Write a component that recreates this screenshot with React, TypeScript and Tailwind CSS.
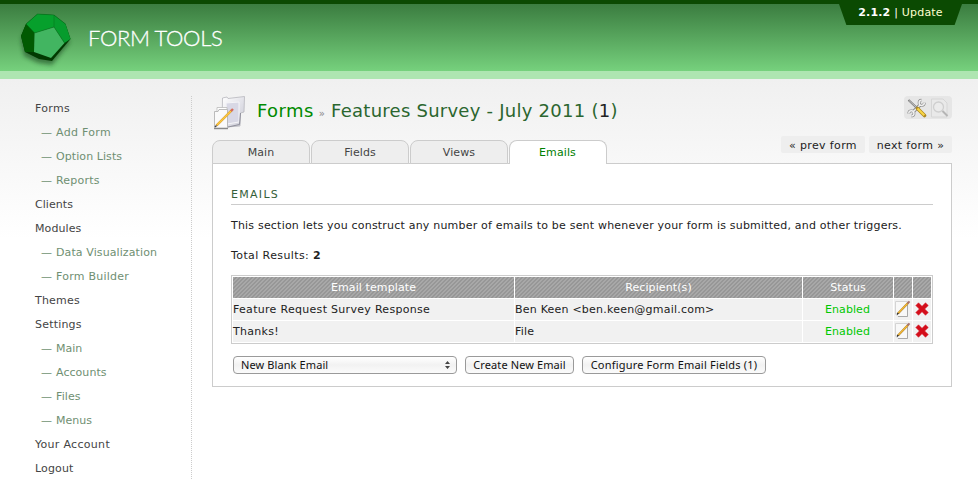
import React from "react";

const nav: { label: string; sub?: boolean; spacing: string }[] = [
  { label: "Forms", spacing: "tracking-[0.3px]" },
  { label: "Add Form", sub: true, spacing: "tracking-[0.3px]" },
  { label: "Option Lists", sub: true, spacing: "tracking-[0.08px]" },
  { label: "Reports", sub: true, spacing: "tracking-[0.2px]" },
  { label: "Clients", spacing: "tracking-[0.05px]" },
  { label: "Modules", spacing: "tracking-[0.1px]" },
  { label: "Data Visualization", sub: true, spacing: "tracking-[0.1px]" },
  { label: "Form Builder", sub: true, spacing: "tracking-[0.25px]" },
  { label: "Themes", spacing: "tracking-[0.2px]" },
  { label: "Settings", spacing: "tracking-[0.2px]" },
  { label: "Main", sub: true, spacing: "tracking-[0px]" },
  { label: "Accounts", sub: true, spacing: "tracking-[0.05px]" },
  { label: "Files", sub: true, spacing: "tracking-[0.1px]" },
  { label: "Menus", sub: true, spacing: "tracking-[0px]" },
  { label: "Your Account", spacing: "tracking-[0.3px]" },
  { label: "Logout", spacing: "tracking-[0.15px]" },
];

const tabs = ["Main", "Fields", "Views", "Emails"];

const emails = [
  { name: "Feature Request Survey Response", to: "Ben Keen <ben.keen@gmail.com>" },
  { name: "Thanks!", to: "File" },
];

const stripes =
  "bg-[repeating-linear-gradient(135deg,#a8a8a8_0px,#a8a8a8_2px,#979797_2px,#979797_2.83px)]";

function Logo() {
  return (
    <svg width="60" height="60" viewBox="16 10 60 60" className="mt-[10px] ml-4 shrink-0">
      <defs>
        <filter id="logoShadow" x="-20%" y="-20%" width="140%" height="150%">
          <feGaussianBlur stdDeviation="2" />
        </filter>
      </defs>
      <path d="M26 28 54 22 70 42 52 65 38 63 24 56 21 40Z" fill="#1d4a20" opacity="0.6" filter="url(#logoShadow)" />
      <path d="M37.5 14 54 15 65.5 24 70.5 39 52 61 39 59 25 52 21 36 26 24Z" fill="#013a01" />
      <path d="M26 24 37.5 14 54 15 54 27 34.5 33Z" fill="#06a02c" />
      <path d="M54 15 65.5 24 70.5 39 64.5 43 54 27Z" fill="#069c2d" />
      <path d="M26 24 34.5 33 34 52 25 52 21 36Z" fill="#015a02" />
      <path d="M34.5 33 54 27 64.5 43 51 58 34 52Z" fill="#42b561" />
      <path d="M26 24 37.5 14 54 15 65.5 24M54 15V27L34.5 33 26 24M54 27 64.5 43" fill="none" stroke="#04701a" strokeWidth=".5" />
    </svg>
  );
}

function FormsIcon() {
  return (
    <svg width="34" height="36" viewBox="212 94 34 36" className="shrink-0">
      <defs>
        <linearGradient id="folder" x1="0" y1="0" x2="1" y2="1">
          <stop offset="0" stopColor="#fff" />
          <stop offset="1" stopColor="#c8c8d4" />
        </linearGradient>
      </defs>
      <path d="M222.500 98 227 97 228 98.500 244.500 96.500 244 112 240.500 113 240 126 226 127 222 124Z" fill="url(#folder)" stroke="#b6b6bd" strokeWidth=".8" />
      <path d="M226 103 239 102 239 122 227 124Z" fill="#d8d8e5" stroke="#f5f5f8" />
      <path d="M240.500 113 239.500 124.500 228 127" fill="none" stroke="#8f8f9b" />
      <path d="M217 107.500H227V126H217Z" fill="#fff" stroke="#bbb" strokeWidth=".8" />
      <path d="M214.500 111.500H218L219 109.500H227.500V128H214.500Z" fill="#fafafa" stroke="#b4b4b4" strokeWidth=".9" />
      <path d="M214 128.700H228" stroke="#777" />
      <path d="M216.500 125.500 231.500 110.500" stroke="#c98d28" strokeWidth="2.400" />
      <path d="M217 125 231 111" stroke="#fcc941" strokeWidth="1.700" />
      <path d="M231 111 233 109" stroke="#d66a5c" strokeWidth="2.400" />
      <path d="M215 127 216.500 125.500" stroke="#444" strokeWidth="1.500" />
    </svg>
  );
}

function ToolsIcon() {
  return (
    <svg width="20" height="20" viewBox="0 0 20 20">
      <path d="M1.500 2 11 11" stroke="#777" strokeWidth="2" />
      <path d="M2 2.500 10 10" stroke="#ddd" strokeWidth=".8" />
      <path d="M5.500 14.500 13.500 6.500" stroke="#8a8a8a" strokeWidth="3.400" />
      <path d="M1.800 15.500A2.600 2.600 0 1 1 4.500 18M14.500 2.200A2.600 2.600 0 1 0 17.300 4.800" fill="none" stroke="#8a8a8a" strokeWidth="2.800" />
      <path d="M5.500 14.500 13.500 6.500M1.800 15.500A2.600 2.600 0 1 1 4.500 18M14.500 2.200A2.600 2.600 0 1 0 17.300 4.800" fill="none" stroke="#f0f0f0" strokeWidth="1.500" />
      <path d="M10.500 10.500 17.500 17.500" stroke="#ad8820" strokeWidth="3.600" strokeLinecap="round" />
      <path d="M10.500 10.500 17.300 17.300" stroke="#f9d545" strokeWidth="2.200" />
    </svg>
  );
}

function PreviewIcon() {
  return (
    <svg width="20" height="20" viewBox="0 0 20 20">
      <path d="M1.500 1H13L17 5V19H1.500Z" fill="#e9e9e9" stroke="#d6d6d6" />
      <circle cx="8.500" cy="9" r="5" fill="#ebebeb" stroke="#cfcfcf" strokeWidth="1.300" />
      <path d="M12.500 13 17.500 18" stroke="#b5b5b5" strokeWidth="2" />
    </svg>
  );
}

function EditIcon() {
  return (
    <svg width="16" height="18" viewBox="0 0 16 18" className="mb-px">
      <path d="M.5 1.500H12.500V16.500H3L.5 14Z" fill="#f8f8f8" stroke="#d4d4d4" />
      <path d="M3 16.500H12.500V5" fill="none" stroke="#a9a9a9" />
      <path d="M3 13.500 13 3" stroke="#a87a30" strokeWidth="2" />
      <path d="M3.200 13.200 12.500 3.500" stroke="#f8bd32" strokeWidth="1.200" />
      <path d="M12.500 3.500 14.500 1.300" stroke="#a9736c" strokeWidth="2" />
      <path d="M2 14.500 3.300 13" stroke="#222" strokeWidth="1.200" />
    </svg>
  );
}

function DeleteIcon() {
  return (
    <svg width="14" height="14" viewBox="0 0 14 14" className="mb-[2px]">
      <path d="M3.500.8 7 4.300 10.500.8 13.300 3.500 9.700 7 13.300 10.500 10.500 13.300 7 9.700 3.500 13.300.8 10.500 4.300 7 .8 3.500Z" fill="#d40d1a" stroke="#d8303c" strokeWidth=".6" />
    </svg>
  );
}

const macButton =
  "flex h-[18px] items-center rounded-[4px] border border-[#9a9a9a] bg-linear-to-b from-white via-[#f2f2f2] to-[#fbfbfb] font-['Noto_Sans',sans-serif] text-[11px] leading-4 text-[#111] whitespace-nowrap";

export default function App() {
  return (
    <div className="h-[496px] w-[978px] overflow-hidden bg-white font-['DejaVu_Sans',Verdana,sans-serif] text-[11px] text-[#222]">
      <header className="relative flex h-[79px] border-t-4 border-b-8 border-t-[#0b4a02] border-b-[#aee5b1] bg-linear-to-b from-[#3b7d40] to-[#76d17d]">
        <div className="-mt-1 flex">
          <Logo />
          <div className="mt-[23px] ml-3 font-[Lato] text-[22px] leading-[30px] font-light tracking-[-0.35px] whitespace-nowrap text-white [-webkit-text-stroke:0.3px_white]">
            FORM TOOLS
          </div>
        </div>
        <div className="absolute top-0 right-4 h-[21px] w-[123px] bg-[#0b4a02] text-center leading-[17px] tracking-[0.2px] text-[#ffffd0] [clip-path:polygon(0_0,100%_0,94%_100%,6%_100%)]">
          <b className="text-white">2.1.2</b> <span className="text-white">|</span> Update
        </div>
      </header>
      <div className="flex h-[417px] bg-[linear-gradient(to_bottom,#f0f0f0,#ffffff_160px)]">
        <nav className="mt-[18px] ml-[35px] h-[384px] w-[157px] shrink-0">
          {nav.map((n) => (
            <div
              key={n.label + String(n.sub)}
              className={
                (n.sub ? "flex h-6 pl-[6px] leading-6 text-[#6f8f72] " : "h-6 leading-6 text-[#444] ") + n.spacing
              }
            >
              {n.sub && <span className="w-[15px] tracking-normal">—</span>}
              {n.label}
            </div>
          ))}
        </nav>
        <div className="mt-[17px] -ml-px h-[384px] w-px shrink-0 bg-[repeating-linear-gradient(to_bottom,#ccc_0px,#ccc_1px,transparent_1px,transparent_2px)]" />
        <main className="ml-5 w-[740px] pt-[15px]">
          <div className="flex h-[46px] items-start">
            <FormsIcon />
            <h1 className="ml-[11px] text-[18px] leading-[34px] tracking-[0.25px] whitespace-nowrap text-[#2b662f]">
              <span className="tracking-[0.4px] text-[#008a00]">Forms</span>
              <span className="mr-[6px] ml-[5px] text-[10px] text-[#888]">»</span>
              Features Survey - July 2011 (<span className="text-[#222]">1</span>)
            </h1>
            <div className="mt-[2px] ml-auto flex h-[23px] w-12 items-center justify-center gap-[3px] rounded-[4px] bg-[#e6e6e6]">
              <ToolsIcon />
              <PreviewIcon />
            </div>
          </div>
          <div className="flex h-[23px]">
            {tabs.map((t) => (
              <div
                key={t}
                className={
                  t === "Emails"
                    ? "z-10 mr-px h-6 w-[98px] rounded-t-[8px] border border-b-0 border-[#ccc] bg-white pr-px text-center leading-[23px] tracking-[0.1px] text-[#008000]"
                    : "mr-px h-6 w-[98px] rounded-t-[8px] border border-[#ccc] bg-[#eee] text-center leading-[23px] tracking-[0.1px] text-[#444]"
                }
              >
                {t}
              </div>
            ))}
            <div className="-mt-1 ml-auto flex gap-1 text-center leading-[19px] tracking-[0.35px] whitespace-nowrap">
              <div className="h-[17px] w-[84px] rounded-[2px] bg-[#eee]">« prev form</div>
              <div className="h-[17px] w-[83px] rounded-[2px] bg-[#eee]">next form »</div>
            </div>
          </div>
          <section className="h-[224px] w-[740px] border border-[#ccc] bg-white px-[18px] pt-[22px]">
            <h2 className="h-[19px] border-b border-[#ccc] leading-[18px] tracking-[1.3px] text-[#35603a]">EMAILS</h2>
            <p className="mt-[13px] leading-4 tracking-[0.2px] whitespace-nowrap">
              This section lets you construct any number of emails to be sent whenever your form is submitted, and other triggers.
            </p>
            <p className="mt-[14px] leading-4 tracking-[0.4px]">
              Total Results: <b>2</b>
            </p>
            <div className="mt-[11px] grid h-[69px] w-[702px] grid-cols-[281px_287px_90px_18px_18px] grid-rows-[21px_21px_21px] gap-px border border-[#ccc] p-px">
              {["Email template", "Recipient(s)", "Status", "", ""].map((h, i) => (
                <div key={i} className={"text-center leading-[21px] tracking-[0.1px] text-white " + stripes}>
                  {h}
                </div>
              ))}
              {emails.map((e) => (
                <React.Fragment key={e.name}>
                  <div className="bg-[#f1f1f1] leading-[21px] tracking-[0.3px]">{e.name}</div>
                  <div className="bg-[#f1f1f1] leading-[21px] tracking-[0.22px]">{e.to}</div>
                  <div className="bg-[#f1f1f1] pr-px text-center leading-[21px] tracking-[0.1px] text-[#00c800]">Enabled</div>
                  <div className="flex items-center justify-center bg-[#f1f1f1]">
                    <EditIcon />
                  </div>
                  <div className="flex items-center justify-center bg-[#f1f1f1]">
                    <DeleteIcon />
                  </div>
                </React.Fragment>
              ))}
            </div>
            <div className="mt-3 ml-[2px] flex gap-2">
              <div className={macButton + " w-[224px] justify-between pr-[6px] pl-[7px] tracking-[0.1px]"}>
                New Blank Email
                <svg width="5" height="8" viewBox="0 0 5 8" fill="#444">
                  <path d="M0 3 2.500 0 5 3ZM0 5 2.500 8 5 5Z" />
                </svg>
              </div>
              <div className={macButton + " w-[109px] justify-center tracking-[0.1px]"}>Create New Email</div>
              <div className={macButton + " w-[184px] justify-center tracking-[0.2px]"}>Configure Form Email Fields (1)</div>
            </div>
          </section>
        </main>
      </div>
    </div>
  );
}
